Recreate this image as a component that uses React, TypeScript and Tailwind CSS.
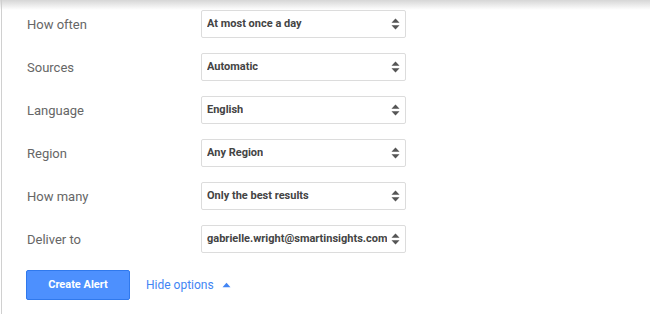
import React from "react";

const rows: [string, string][] = [
  ["How often", "At most once a day"],
  ["Sources", "Automatic"],
  ["Language", "English"],
  ["Region", "Any Region"],
  ["How many", "Only the best results"],
  ["Deliver to", "gabrielle.wright@smartinsights.com"],
];

function Arrows() {
  return (
    <svg width="9" height="12" viewBox="0 0 9 12" className="shrink-0">
      <path d="M4.5 0.5 L8.5 4.8 L0.5 4.8 Z" fill="#555" />
      <path d="M4.5 11.5 L8.5 7.2 L0.5 7.2 Z" fill="#555" />
    </svg>
  );
}

export default function App() {
  return (
    <div
      className="relative w-[650px] h-[314px] bg-white overflow-hidden"
      style={{ fontFamily: "Roboto, 'Liberation Sans', Arial, sans-serif" }}
    >
      <div className="absolute left-0 top-0 w-full h-[10px] bg-gradient-to-b from-[#d6d6d6] to-white/0" />
      <div className="absolute left-[1px] top-0 w-px h-full bg-[#d0d0d0]" />
      <div className="flex flex-col pt-[10px] pl-[27px]">
        {rows.map(([label, value]) => (
          <div key={label} className="flex items-center h-[28px] mb-[15px]">
            <div className="w-[174px] text-[13px] text-[#666] pt-[1px]">{label}</div>
            <div className="flex items-center justify-between w-[205px] h-[28px] border border-[#dcdcdc] rounded-[2px] pl-[5px] pr-[5px]">
              <span className="text-[11px] font-bold text-[#444] whitespace-nowrap overflow-hidden pt-[1px]">
                {value}
              </span>
              <Arrows />
            </div>
          </div>
        ))}
        <div className="flex items-center mt-[2px]">
          <button className="w-[104px] h-[30px] ml-[-1px] bg-[#4d90fe] border border-[#3079ed] rounded-[2px] text-white text-[11px] font-bold">
            Create Alert
          </button>
          <div className="flex items-center ml-[16px] text-[12px] text-[#4285f4]">
            <span>Hide options</span>
            <svg width="9" height="6" viewBox="0 0 9 6" className="ml-[8px]">
              <path d="M0.5 5.2 L4.5 0.8 L8.5 5.2 Z" fill="#4285f4" />
            </svg>
          </div>
        </div>
      </div>
    </div>
  );
}
